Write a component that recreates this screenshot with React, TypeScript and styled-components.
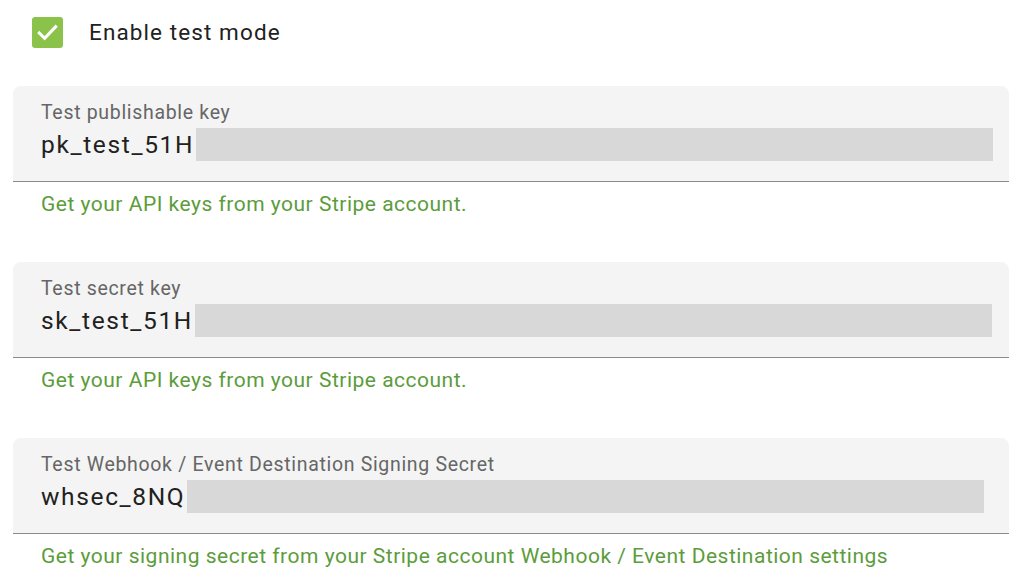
import React from "react";
import styled, { createGlobalStyle } from "styled-components";

const Global = createGlobalStyle`
  html, body { margin: 0; padding: 0; background: #ffffff; }
  body { font-family: Roboto, "Noto Sans", sans-serif; color: #212121; }
`;

const Page = styled.div`
  display: flex;
  flex-direction: column;
  padding: 17px 15px 0 13px;
`;

const CheckRow = styled.label`
  display: flex;
  align-items: center;
  gap: 26px;
  padding-left: 19px;
  height: 31px;
  margin-bottom: 38px;
  font-size: 22.5px;
  line-height: 29px;
  letter-spacing: 1.1px;
  color: #212121;
`;

const Box = styled.span`
  width: 31px;
  height: 31px;
  border-radius: 3px;
  background: #8bc34a;
  display: flex;
  align-items: center;
  justify-content: center;
`;

const Field = styled.div`
  display: flex;
  flex-direction: column;
  margin-bottom: 47px;
`;

const FieldBox = styled.div`
  background: #f4f4f4;
  border-radius: 8px 8px 0 0;
  border-bottom: 1px solid #8a8a8a;
  padding: 17px 28px 20px 28px;
  display: flex;
  flex-direction: column;
  gap: 5px;
`;

const Label = styled.div`
  font-size: 19.5px;
  line-height: 20px;
  color: #666666;
  letter-spacing: 0.68px;
  white-space: nowrap;
`;

const ValueRow = styled.div`
  display: flex;
  align-items: center;
  height: 33px;
  font-size: 24.5px;
  color: #212121;
  letter-spacing: 1.65px;
  white-space: nowrap;
`;

const Redacted = styled.span`
  display: block;
  flex: none;
  width: 797px;
  height: 33px;
  margin-left: 2px;
  background: #d8d8d8;
`;

const Helper = styled.div`
  margin-top: 11px;
  padding-left: 28px;
  font-size: 21px;
  line-height: 22px;
  color: #5c9c3b;
  letter-spacing: 0.5px;
  white-space: nowrap;
`;

const fields = [
  { label: "Test publishable key", value: "pk_test_51H", help: "Get your API keys from your Stripe account." },
  { label: "Test secret key", value: "sk_test_51H", help: "Get your API keys from your Stripe account." },
  {
    label: "Test Webhook / Event Destination Signing Secret",
    value: "whsec_8NQ",
    help: "Get your signing secret from your Stripe account Webhook / Event Destination settings",
  },
];

export default function App() {
  return (
    <>
      <Global />
      <Page>
        <CheckRow>
          <Box>
            <svg width="23" height="23" viewBox="0 0 24 24" fill="none">
              <path d="M3.5 12.5l5.5 5.5L20.5 6" stroke="#ffffff" strokeWidth="3.2" strokeLinecap="square" />
            </svg>
          </Box>
          Enable test mode
        </CheckRow>
        {fields.map((f) => (
          <Field key={f.label}>
            <FieldBox>
              <Label>{f.label}</Label>
              <ValueRow>
                {f.value}
                <Redacted />
              </ValueRow>
            </FieldBox>
            <Helper>{f.help}</Helper>
          </Field>
        ))}
      </Page>
    </>
  );
}
